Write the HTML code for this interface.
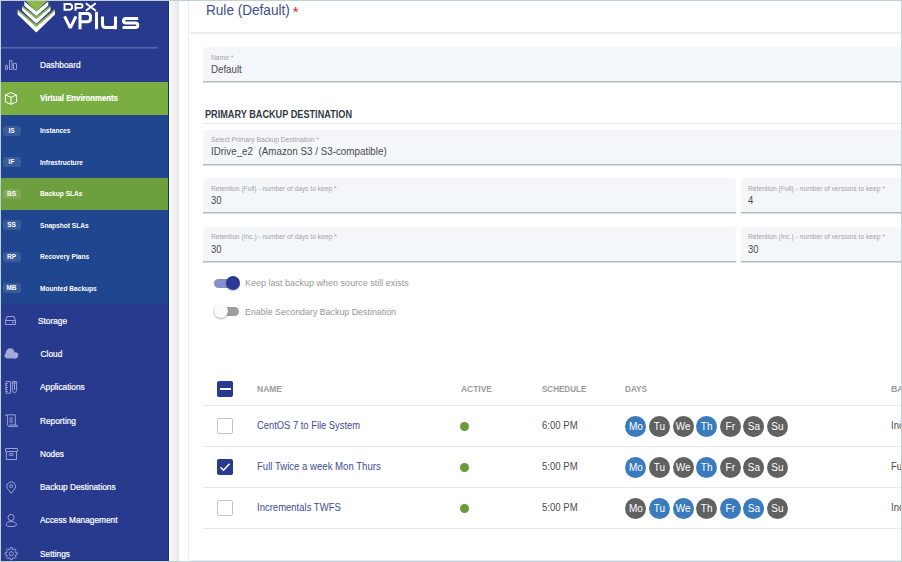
<!DOCTYPE html>
<html><head><meta charset="utf-8">
<style>
*{margin:0;padding:0;box-sizing:border-box}
html,body{width:902px;height:562px;overflow:hidden;background:#fff;font-family:"Liberation Sans",sans-serif}
.abs{position:absolute;white-space:nowrap}
.tx{position:absolute;white-space:pre;transform-origin:0 0;line-height:normal}
#frame{position:absolute;left:0;top:0;width:902px;height:562px;border:1px solid #bfd0d6;pointer-events:none;z-index:50}
#side{position:absolute;left:0;top:0;width:169px;height:562px;background:#283a8e;overflow:hidden}
#side .edge{position:absolute;right:0;top:0;width:1px;height:562px;background:#1b2b80}
.row{position:absolute;left:0;width:168px}
.mi{position:absolute;left:40px;color:#fff;font-size:8.3px;-webkit-text-stroke:0.2px #fff;line-height:33px;white-space:nowrap;transform-origin:0 50%}
.sb{position:absolute;left:40px;color:#fff;font-size:6.6px;font-weight:bold;line-height:31.5px;white-space:nowrap}
.bd{position:absolute;left:2.5px;width:18px;height:10px;border-radius:3px;background:rgba(255,255,255,0.12);color:#fff;font-size:6.5px;font-weight:bold;text-align:center;line-height:10px}
#gut{position:absolute;left:169.5px;top:0;width:9.5px;height:562px;background:linear-gradient(to right,#f7f7f7,#e9e9e9)}
#card{position:absolute;left:188px;top:0;width:720px;height:561px;border:1px solid #ececec;border-radius:3px;background:#fff}
.hdrline{position:absolute;left:190px;top:32px;width:712px;height:2px;background:linear-gradient(#e9e9e9,#f1f1f1);border-radius:2px 0 0 2px}
.fld{position:absolute;height:35px;background:#f3f7fa;border-bottom:1px solid #b9bcbf;box-shadow:0 1px 0 #d6d8da;border-radius:3px 3px 0 0}
.rl{position:absolute;left:203px;width:699px;height:1px;background:#e8e8e8}
.cb{position:absolute;left:217px;width:16px;height:16px;border:1px solid #c2c2c2;border-radius:2px;background:#fff}
.dot{position:absolute;left:460.2px;width:9px;height:9px;border-radius:50%;background:#6a9a3a}
.days{position:absolute;left:625.4px;height:21px;display:flex;gap:2.6px}
.days span{width:21px;height:21px;border-radius:50%;background:#616161;color:#fff;font-size:10px;text-align:center;line-height:21px}
.days span.on{background:#3a7bbd}
</style></head><body>
<div id="side">
  <div class="row" style="top:82px;height:33px;background:#7aae42"></div>
  <div class="row" style="top:115px;height:189px;background:#1f468f"></div>
  <div class="row" style="top:178px;height:31.5px;background:#6e9f3e"></div>
  <svg class="abs" style="left:0;top:0" width="168" height="562" viewBox="0 0 168 562">
    <g fill="#8dbb45">
      <polygon points="24.8,0 47.8,0 36.3,11.6"/>
      <polygon points="22.05,5.6 36.3,16.6 50.55,5.6 50.55,7.2 36.3,19.1 22.05,7.2"/>
      <polygon points="17.6,9.1 36.3,24.6 55.00,9.1 55.00,10.8 36.3,27.0 17.6,10.8"/>
    </g>
    <g fill="#fff">
      <polygon points="24.3,1.3 36.3,11.6 48.30,1.3 48.30,5.8 36.3,16.1 24.3,5.8"/>
      <polygon points="22.05,7.2 36.3,19.1 50.55,7.2 50.55,10.6 36.3,23.8 22.05,10.6"/>
      <polygon points="17.6,10.8 36.3,27.0 55.00,10.8 55.00,14.6 36.3,32.4 17.6,14.6"/>
    </g>
    <g fill="none" stroke="#fff" stroke-width="1.9">
      <path d="M64.5,4 H69 Q72.1,4 72.1,6.8 V7 Q72.1,9.8 69,9.8 H64.5 Z"/>
      <path d="M75.5,10.8 V4 H80.4 Q82.5,4 82.5,5.8 V6.1 Q82.5,7.9 80.4,7.9 H75.5"/>
      <path d="M85.8,3.3 L95.8,10.7 M95.8,3.3 L85.8,10.7"/>
    </g>
    <g fill="none" stroke="#fff" stroke-width="3" stroke-linejoin="miter">
      <path d="M64.6,16.4 L70.3,27.8 L76,16.4" stroke-linejoin="bevel"/>
      <path d="M80,29.2 V13.5 H87.2 Q90.5,13.5 90.5,16.8 V18.5 Q90.5,21.8 87.2,21.8 H80"/>
      <path d="M96.5,11.8 V29.2"/>
      <path d="M102.5,16.6 V24.2 Q102.5,27.6 105.9,27.6 H112.1 Q115.5,27.6 115.5,24.2 V16.6 M115.5,24 V29.2"/>
      <path d="M138.2,18.5 H126.1 Q123.5,18.5 123.5,20.8 Q123.5,23.1 126.1,23.1 H135.4 Q137.8,23.1 137.8,25.35 Q137.8,27.6 135.4,27.6 H122.6"/>
    </g>
    <rect x="0" y="47" width="157.5" height="1.6" fill="#5766ad"/>
    <!-- icons -->
    <g fill="none" stroke="#9aa3d8" stroke-width="1">
      <rect x="5.5" y="65.5" width="2" height="4" rx="0.3"/>
      <rect x="9.5" y="60.5" width="2.5" height="9" rx="0.4"/>
      <rect x="13.5" y="63.5" width="3" height="6" rx="0.4"/>
      <path d="M7,316.5 H14 L15.5,320.5 V324.5 H5.5 V320.5 Z M5.5,320.5 H15.5"/>
      <path d="M12,322.5 H14.3" stroke-width="1.2" stroke="#8f98d0"/>
      <rect x="5.9" y="381.5" width="4.6" height="11.8" rx="0.4"/>
      <path d="M5.9,383.5 H8 M5.9,385.5 H7.5 M5.9,387.5 H8 M5.9,389.5 H7.5 M5.9,391.5 H8" stroke-width="0.8"/>
      <path d="M12.4,381.5 H16.6 V390.8 L14.5,393.2 L12.4,390.8 Z M12.4,383 H16.6 M14.5,383 V390"/>
      <rect x="9.4" y="417" width="3.4" height="6.2" fill="#6570b8" stroke="none"/>
      <path d="M5.3,416.3 Q5.3,414.8 6.9,414.8 H15.3 V425 M7.6,414.8 V425.3 Q7.6,426.4 9,426.4 H17.5 Q17.5,425 16.2,425 H9.2"/>
      <rect x="5.5" y="448.5" width="12" height="3" rx="0.4"/>
      <path d="M6.3,451.5 V459.5 H16.5 V451.5"/>
      <rect x="9.3" y="453.6" width="3.8" height="1.8" rx="0.5"/>
      <path d="M11.2,493.2 L7.6,488.8 A4.4,4.4 0 1 1 14.8,488.8 Z"/>
      <circle cx="11.2" cy="486.2" r="1.5"/>
      <circle cx="11.1" cy="517.5" r="3.1"/>
      <path d="M6.2,525.2 Q6.2,521.6 11.1,521.6 Q16.4,521.6 16.4,525.2 Q16.4,526.6 11.1,526.6 Q6.2,526.6 6.2,525.2 Z"/>
      <circle cx="11.2" cy="553.7" r="2"/>
    </g>
    <g fill="#a4aad8"><circle cx="10.2" cy="352.6" r="4.3"/><circle cx="15.2" cy="355.3" r="3.1"/><circle cx="7.2" cy="355.6" r="2.7"/><rect x="7.2" y="354.5" width="8" height="3.9"/></g>
    <path fill="none" stroke="#9aa3d8" stroke-width="1" stroke-linejoin="round" d="M9.90,549.50 L10.17,547.69 L12.23,547.69 L12.50,549.50 L13.25,549.81 L14.72,548.72 L16.18,550.18 L15.09,551.65 L15.40,552.40 L17.21,552.67 L17.21,554.73 L15.40,555.00 L15.09,555.75 L16.18,557.22 L14.72,558.68 L13.25,557.59 L12.50,557.90 L12.23,559.71 L10.17,559.71 L9.90,557.90 L9.15,557.59 L7.68,558.68 L6.22,557.22 L7.31,555.75 L7.00,555.00 L5.19,554.73 L5.19,552.67 L7.00,552.40 L7.31,551.65 L6.22,550.18 L7.68,548.72 L9.15,549.81 Z"/>
    <path fill="none" stroke="#ffffff" stroke-width="1" d="M11,92.6 L16.6,95 V102 L11,104.3 L5.4,102 V95 Z M5.4,95 L11,97.3 L16.6,95 M11,97.3 V104.3"/>
  </svg>
  <div class="mi" style="top:49px">Dashboard</div>
  <div class="mi" style="top:82px;font-weight:bold;font-size:9.2px;transform:scaleX(0.845)">Virtual Environments</div>
  <div class="bd" style="top:125.5px">IS</div><div class="sb" style="top:115px">Instances</div>
  <div class="bd" style="top:157px">IF</div><div class="sb" style="top:146.5px">Infrastructure</div>
  <div class="bd" style="top:188.5px">BS</div><div class="sb" style="top:178px">Backup SLAs</div>
  <div class="bd" style="top:220px">SS</div><div class="sb" style="top:209.5px">Snapshot SLAs</div>
  <div class="bd" style="top:251.5px">RP</div><div class="sb" style="top:241px">Recovery Plans</div>
  <div class="bd" style="top:283px">MB</div><div class="sb" style="top:272.5px">Mounted Backups</div>
  <div class="mi" style="top:304.6px;left:38px">Storage</div>
  <div class="mi" style="top:338px;left:40.6px">Cloud</div>
  <div class="mi" style="top:371.3px">Applications</div>
  <div class="mi" style="top:405px">Reporting</div>
  <div class="mi" style="top:438.2px">Nodes</div>
  <div class="mi" style="top:470.7px">Backup Destinations</div>
  <div class="mi" style="top:504px">Access Management</div>
  <div class="mi" style="top:538px">Settings</div>
  <div class="edge"></div>
</div>
<div id="gut"></div>
<div id="card"></div>
<div class="hdrline"></div>

<div class="fld" style="left:203px;top:47px;width:699px"></div>
<div class="rl" style="top:123px"></div>
<div class="fld" style="left:203px;top:130px;width:699px"></div>
<div class="fld" style="left:203px;top:178px;width:533px"></div>
<div class="fld" style="left:741px;top:178px;width:161px"></div>
<div class="fld" style="left:203px;top:227px;width:533px"></div>
<div class="fld" style="left:741px;top:227px;width:161px"></div>

<!-- toggles -->
<div class="abs" style="left:214px;top:278.7px;width:25px;height:9.5px;border-radius:5px;background:#8590cb"></div>
<div class="abs" style="left:225.5px;top:276.2px;width:14px;height:14px;border-radius:50%;background:#2a3a92;box-shadow:0 1px 1.5px rgba(0,0,0,.25)"></div>
<div class="abs" style="left:214px;top:306.7px;width:25px;height:9.5px;border-radius:5px;background:#9e9e9e"></div>
<div class="abs" style="left:214px;top:304.4px;width:14px;height:14px;border-radius:50%;background:#fafafa;box-shadow:0 1px 2px rgba(0,0,0,.35)"></div>

<!-- table -->
<div class="abs" style="left:217px;top:380.5px;width:16px;height:16px;border-radius:2px;background:#283a8e"></div>
<div class="abs" style="left:219.5px;top:387.5px;width:11px;height:2.5px;background:#fff"></div>
<div class="rl" style="top:405px"></div>
<div class="cb" style="top:418.2px"></div>
<div class="dot" style="top:422.3px"></div>
<div class="days" style="top:416px"><span class="on">Mo</span><span>Tu</span><span>We</span><span class="on">Th</span><span>Fr</span><span>Sa</span><span>Su</span></div>
<div class="rl" style="top:446px"></div>
<div class="abs" style="left:217px;top:459px;width:16px;height:16px;border-radius:2px;background:#283a8e"></div>
<svg class="abs" style="left:217px;top:459px" width="16" height="16" viewBox="0 0 16 16"><polyline points="3.5,8.2 6.5,11.2 12.5,4.8" fill="none" stroke="#fff" stroke-width="1.6"/></svg>
<div class="dot" style="top:463.1px"></div>
<div class="days" style="top:457px"><span class="on">Mo</span><span>Tu</span><span>We</span><span class="on">Th</span><span>Fr</span><span>Sa</span><span>Su</span></div>
<div class="rl" style="top:487px"></div>
<div class="cb" style="top:500px"></div>
<div class="dot" style="top:504.2px"></div>
<div class="days" style="top:498px"><span>Mo</span><span class="on">Tu</span><span class="on">We</span><span>Th</span><span class="on">Fr</span><span class="on">Sa</span><span>Su</span></div>
<div class="rl" style="top:528px"></div>

<div class="tx" style="left:205.90px;top:1.52px;font-size:14.9px;font-weight:normal;color:#3b4d96;transform:scaleX(0.9121);">Rule (Default)</div>
<div class="tx" style="left:210.60px;top:53.95px;font-size:6.8px;font-weight:normal;color:#a3a3a3;transform:scaleX(0.9880);">Name *</div>
<div class="tx" style="left:210.60px;top:63.59px;font-size:10.4px;font-weight:normal;color:#4a4a4a;transform:scaleX(0.9351);">Default</div>
<div class="tx" style="left:205.00px;top:108.10px;font-size:10.5px;font-weight:bold;color:#343a44;transform:scaleX(0.8709);">PRIMARY BACKUP DESTINATION</div>
<div class="tx" style="left:210.60px;top:136.05px;font-size:6.8px;font-weight:normal;color:#a3a3a3;transform:scaleX(0.9891);">Select Primary Backup Destination *</div>
<div class="tx" style="left:210.60px;top:145.79px;font-size:10.4px;font-weight:normal;color:#4a4a4a;transform:scaleX(0.9448);">IDrive_e2  (Amazon S3 / S3-compatible)</div>
<div class="tx" style="left:210.80px;top:184.65px;font-size:6.8px;font-weight:normal;color:#a3a3a3;transform:scaleX(0.9807);">Retention (Full) - number of days to keep *</div>
<div class="tx" style="left:210.80px;top:194.59px;font-size:10.4px;font-weight:normal;color:#4a4a4a;transform:scaleX(0.9081);">30</div>
<div class="tx" style="left:748.40px;top:184.65px;font-size:6.8px;font-weight:normal;color:#a3a3a3;transform:scaleX(0.9854);">Retention (Full) - number of versions to keep *</div>
<div class="tx" style="left:748.40px;top:194.59px;font-size:10.4px;font-weight:normal;color:#4a4a4a;transform:scaleX(0.9080);">4</div>
<div class="tx" style="left:210.80px;top:232.85px;font-size:6.8px;font-weight:normal;color:#a3a3a3;transform:scaleX(0.9822);">Retention (Inc.) - number of days to keep *</div>
<div class="tx" style="left:210.80px;top:243.59px;font-size:10.4px;font-weight:normal;color:#4a4a4a;transform:scaleX(0.9081);">30</div>
<div class="tx" style="left:748.40px;top:232.85px;font-size:6.8px;font-weight:normal;color:#a3a3a3;transform:scaleX(0.9854);">Retention (Inc.) - number of versions to keep *</div>
<div class="tx" style="left:748.40px;top:243.59px;font-size:10.4px;font-weight:normal;color:#4a4a4a;transform:scaleX(0.9081);">30</div>
<div class="tx" style="left:245.00px;top:277.86px;font-size:9.0px;font-weight:normal;color:#969696;transform:scaleX(1.0006);">Keep last backup when source still exists</div>
<div class="tx" style="left:245.00px;top:306.66px;font-size:9.0px;font-weight:normal;color:#969696;transform:scaleX(0.9830);">Enable Secondary Backup Destination</div>
<div class="tx" style="left:256.90px;top:383.41px;font-size:9.6px;font-weight:bold;color:#9b9b9b;transform:scaleX(0.8850);">NAME</div>
<div class="tx" style="left:460.80px;top:383.41px;font-size:9.6px;font-weight:bold;color:#9b9b9b;transform:scaleX(0.8810);">ACTIVE</div>
<div class="tx" style="left:541.70px;top:383.41px;font-size:9.6px;font-weight:bold;color:#9b9b9b;transform:scaleX(0.8393);">SCHEDULE</div>
<div class="tx" style="left:624.60px;top:383.41px;font-size:9.6px;font-weight:bold;color:#9b9b9b;transform:scaleX(0.8533);">DAYS</div>
<div class="tx" style="left:890.90px;top:383.41px;font-size:9.6px;font-weight:bold;color:#9b9b9b;transform:scaleX(0.9200);">BACKUP TYPE</div>
<div class="tx" style="left:256.90px;top:419.23px;font-size:10.8px;font-weight:normal;color:#3e4b94;transform:scaleX(0.8678);">CentOS 7 to File System</div>
<div class="tx" style="left:256.90px;top:460.13px;font-size:10.8px;font-weight:normal;color:#3e4b94;transform:scaleX(0.8872);">Full Twice a week Mon Thurs</div>
<div class="tx" style="left:256.90px;top:501.13px;font-size:10.8px;font-weight:normal;color:#3e4b94;transform:scaleX(0.8802);">Incrementals TWFS</div>
<div class="tx" style="left:541.70px;top:419.33px;font-size:10.8px;font-weight:normal;color:#4a4a4a;transform:scaleX(0.8852);">6:00 PM</div>
<div class="tx" style="left:541.70px;top:460.33px;font-size:10.8px;font-weight:normal;color:#4a4a4a;transform:scaleX(0.8852);">5:00 PM</div>
<div class="tx" style="left:541.70px;top:501.33px;font-size:10.8px;font-weight:normal;color:#4a4a4a;transform:scaleX(0.8852);">5:00 PM</div>
<div class="tx" style="left:890.90px;top:419.33px;font-size:10.8px;font-weight:normal;color:#4a4a4a;transform:scaleX(0.8800);">Incremental</div>
<div class="tx" style="left:890.90px;top:460.33px;font-size:10.8px;font-weight:normal;color:#4a4a4a;transform:scaleX(0.8800);">Full</div>
<div class="tx" style="left:890.90px;top:501.33px;font-size:10.8px;font-weight:normal;color:#4a4a4a;transform:scaleX(0.8800);">Incremental</div>
<div class="tx" style="left:292.8px;top:2.6px;font-size:15px;color:#c62828">*</div>

<div id="frame"></div>
</body></html>
